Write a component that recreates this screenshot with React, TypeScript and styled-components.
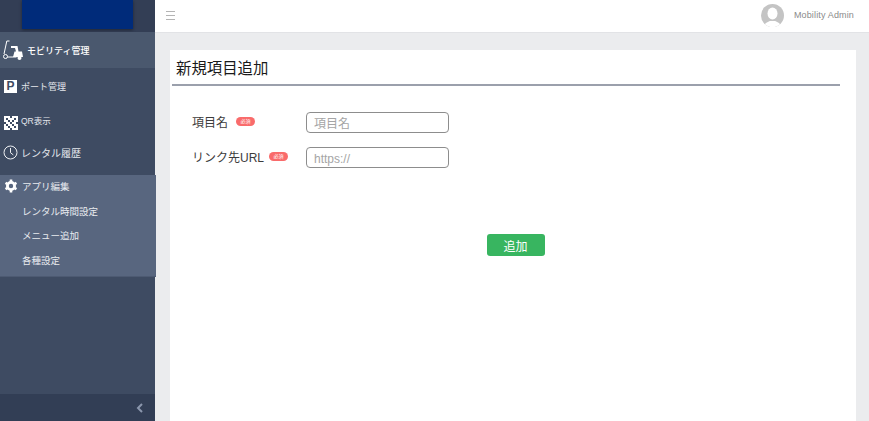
import React from 'react';
import styled, { createGlobalStyle } from 'styled-components';

const GlobalStyle = createGlobalStyle`
  html, body {
    margin: 0;
    padding: 0;
    height: 100%;
    overflow: hidden;
    font-family: "Liberation Sans", "Noto Sans CJK JP", sans-serif;
  }
  * { box-sizing: border-box; }
`;

const Layout = styled.div`
  display: flex;
  width: 869px;
  height: 421px;
  background: #ebecee;
`;

const Sidebar = styled.aside`
  width: 155px;
  flex-shrink: 0;
  display: flex;
  flex-direction: column;
  background: #3e4b62;
`;

const LogoArea = styled.div`
  height: 32px;
  background: #333e55;
  padding: 0 22px;
`;

const Logo = styled.div`
  width: 111px;
  height: 29px;
  background: #002b7a;
  box-shadow: 0 1px 3px rgba(0, 0, 0, 0.4);
`;

const NavItem = styled.div<{ $active?: boolean; $height: number; $size?: number; $after?: number }>`
  display: flex;
  align-items: center;
  gap: ${(p) => (p.$active ? 4 : 3)}px;
  height: ${(p) => p.$height}px;
  margin-bottom: ${(p) => p.$after || 0}px;
  padding-left: 3px;
  background: ${(p) => (p.$active ? '#4a586e' : 'transparent')};
  color: ${(p) => (p.$active ? '#ffffff' : '#e4e7ec')};
  font-size: ${(p) => p.$size || 9}px;
  font-weight: ${(p) => (p.$active ? 500 : 400)};
`;

const IconSlot = styled.span<{ $width?: number }>`
  width: ${(p) => p.$width || 15}px;
  display: flex;
  justify-content: center;
  flex-shrink: 0;
`;

const ParkingIcon = styled.span`
  width: 13px;
  height: 13px;
  background: #ffffff;
  color: #3e4b62;
  font-size: 12px;
  font-weight: 700;
  line-height: 13px;
  text-align: center;
`;

const QrLabel = styled.span`
  font-size: 8.5px;
  line-height: 9px;
  margin-bottom: 2px;
`;

const Group = styled.div`
  background: #58667f;
  border-bottom: 1px solid #4d5a72;
  height: 102px;
  width: 156px;
  color: #e8ebef;
`;

const GroupHead = styled.div`
  display: flex;
  align-items: center;
  gap: 4px;
  height: 23.5px;
  padding: 0 0 2px 3px;
  font-size: 9.5px;
`;

const SubItem = styled.div`
  height: 24.5px;
  display: flex;
  align-items: center;
  padding-left: 22px;
  font-size: 9.5px;
`;

const SidebarSpacer = styled.div`
  flex: 1;
`;

const Collapse = styled.div`
  height: 27px;
  background: #323e55;
  display: flex;
  align-items: center;
  justify-content: flex-end;
  padding-right: 12px;
`;

const Main = styled.main`
  flex: 1;
  min-width: 0;
  display: flex;
  flex-direction: column;
`;

const TopBar = styled.header`
  height: 33px;
  background: #ffffff;
  border-bottom: 1px solid #e2e3e6;
  display: flex;
  align-items: center;
  justify-content: space-between;
  padding: 0 15px 2px 11px;
`;

const Burger = styled.div`
  width: 9px;
  height: 9px;
  border-top: 1px solid #b4b4b4;
  border-bottom: 1px solid #b4b4b4;
  position: relative;
  &::after {
    content: '';
    position: absolute;
    left: 0;
    right: 0;
    top: 3px;
    height: 1px;
    background: #b4b4b4;
  }
`;

const UserBox = styled.div`
  display: flex;
  align-items: center;
  gap: 10px;
  color: #8a8a8a;
  font-size: 9px;
  letter-spacing: 0.15px;
`;

const Card = styled.section`
  flex: 1;
  margin: 17px 13px 0 15px;
  background: #ffffff;
  padding: 0 16px 0 2px;
  display: flex;
  flex-direction: column;
`;

const Title = styled.h1`
  margin: 0;
  height: 36px;
  border-bottom: 2px solid #9ba0ac;
  padding: 8px 0 0 4px;
  font-size: 15.4px;
  line-height: 22px;
  font-weight: 400;
  color: #1a1a1a;
`;

const Form = styled.div`
  display: flex;
  flex-direction: column;
  gap: 14px;
  padding: 26px 0 0 20px;
`;

const Row = styled.div`
  display: flex;
  align-items: center;
`;

const LabelCell = styled.div<{ $gap: number }>`
  width: 114px;
  display: flex;
  align-items: center;
  gap: ${(p) => p.$gap}px;
  padding-bottom: 2px;
  color: #3c3c3c;
  font-size: 12px;
`;

const Required = styled.span`
  width: 19px;
  height: 9px;
  border-radius: 5px;
  background: #f96b6b;
  color: #ffffff;
  font-size: 5px;
  line-height: 9px;
  text-align: center;
`;

const Input = styled.input`
  width: 143px;
  height: 21px;
  border: 1px solid #8d8d8d;
  border-radius: 4px;
  padding: 3px 7px 0;
  font-family: inherit;
  font-size: 12px;
  outline: none;
  &::placeholder {
    color: #a5a5a5;
    opacity: 1;
  }
`;

const Actions = styled.div`
  display: flex;
  justify-content: center;
  padding: 66px 0 0 19px;
`;

const AddButton = styled.button`
  width: 58px;
  height: 22px;
  border: none;
  border-radius: 3px;
  background: #38b560;
  color: #ffffff;
  font-family: inherit;
  font-size: 12px;
  padding: 0;
`;

const ScooterIcon = () => (
  <svg width="20" height="21" viewBox="0 0 20 21" fill="none">
    <path d="M6.5 1H3.8L1 14" stroke="#fff" strokeWidth="1" />
    <circle cx="2.5" cy="16.5" r="2" stroke="#fff" strokeWidth="1" />
    <path d="M4.5 17h9" stroke="#fff" strokeWidth="1" />
    <path d="M8 6h6.5l1 5.5H19l1 5.5H10l1.5-5.5h1.5L12 8H8z" fill="#fff" />
    <circle cx="16.5" cy="18" r="2" fill="#fff" />
  </svg>
);

const qrCells = [
  1, 1, 1, 0, 1, 1, 1,
  1, 0, 1, 1, 1, 0, 1,
  1, 1, 0, 1, 0, 1, 1,
  0, 1, 1, 0, 1, 1, 0,
  1, 0, 1, 1, 0, 1, 1,
  1, 1, 0, 1, 1, 0, 1,
  1, 1, 1, 0, 1, 1, 1,
];

const QrIcon = () => (
  <svg width="14" height="14" viewBox="0 0 14 14" shapeRendering="crispEdges">
    {qrCells.map((on, i) =>
      on ? <rect key={i} x={(i % 7) * 2} y={Math.floor(i / 7) * 2} width="2" height="2" fill="#fff" /> : null
    )}
  </svg>
);

const ClockIcon = () => (
  <svg width="15" height="15" viewBox="0 0 15 15" fill="none" stroke="#eef0f3" strokeWidth="1">
    <circle cx="7.5" cy="7.5" r="6.5" />
    <path d="M7.5 3v4.7l2.8 2.2" />
  </svg>
);

const GearIcon = () => (
  <svg width="14" height="14" viewBox="0 0 14 14" fill="none" stroke="#fff">
    <circle cx="7" cy="7" r="3.6" strokeWidth="2.8" />
    <path d="M7 .6v2.4M7 11v2.4M1.5 3.8l2 1.2M10.5 9l2 1.2M1.5 10.2l2-1.2M10.5 5l2-1.2" strokeWidth="2.6" />
  </svg>
);

const AvatarIcon = () => (
  <svg width="23" height="23" viewBox="0 0 23 23">
    <defs>
      <clipPath id="avatar-clip">
        <circle cx="11.5" cy="11.5" r="11.5" />
      </clipPath>
    </defs>
    <g clipPath="url(#avatar-clip)">
      <rect width="23" height="23" fill="#c4c4c4" />
      <ellipse cx="11.5" cy="9.5" rx="5" ry="6" fill="#fff" />
      <path d="M2 24c1-5 5-6 7-7h5c2 1 6 2 7 7z" fill="#fff" />
    </g>
  </svg>
);

const ChevronIcon = () => (
  <svg width="7" height="10" viewBox="0 0 7 10" fill="none" stroke="#8b97ad" strokeWidth="2">
    <path d="M6 1 2 5l4 4" />
  </svg>
);

export default function App() {
  return (
    <Layout>
      <GlobalStyle />
      <Sidebar>
        <LogoArea>
          <Logo />
        </LogoArea>
        <NavItem $active $height={36}>
          <IconSlot $width={20}>
            <ScooterIcon />
          </IconSlot>
          モビリティ管理
        </NavItem>
        <NavItem $height={37}>
          <IconSlot>
            <ParkingIcon>P</ParkingIcon>
          </IconSlot>
          ポート管理
        </NavItem>
        <NavItem $height={35}>
          <IconSlot>
            <QrIcon />
          </IconSlot>
          <QrLabel>QR表示</QrLabel>
        </NavItem>
        <NavItem $height={25} $size={10} $after={10}>
          <IconSlot>
            <ClockIcon />
          </IconSlot>
          レンタル履歴
        </NavItem>
        <Group>
          <GroupHead>
            <IconSlot>
              <GearIcon />
            </IconSlot>
            アプリ編集
          </GroupHead>
          <SubItem>レンタル時間設定</SubItem>
          <SubItem>メニュー追加</SubItem>
          <SubItem>各種設定</SubItem>
        </Group>
        <SidebarSpacer />
        <Collapse>
          <ChevronIcon />
        </Collapse>
      </Sidebar>
      <Main>
        <TopBar>
          <Burger />
          <UserBox>
            <AvatarIcon />
            Mobility Admin
          </UserBox>
        </TopBar>
        <Card>
          <Title>新規項目追加</Title>
          <Form>
            <Row>
              <LabelCell $gap={8}>
                項目名
                <Required>必須</Required>
              </LabelCell>
              <Input placeholder="項目名" />
            </Row>
            <Row>
              <LabelCell $gap={5}>
                リンク先URL
                <Required>必須</Required>
              </LabelCell>
              <Input placeholder="https://" />
            </Row>
          </Form>
          <Actions>
            <AddButton>追加</AddButton>
          </Actions>
        </Card>
      </Main>
    </Layout>
  );
}
